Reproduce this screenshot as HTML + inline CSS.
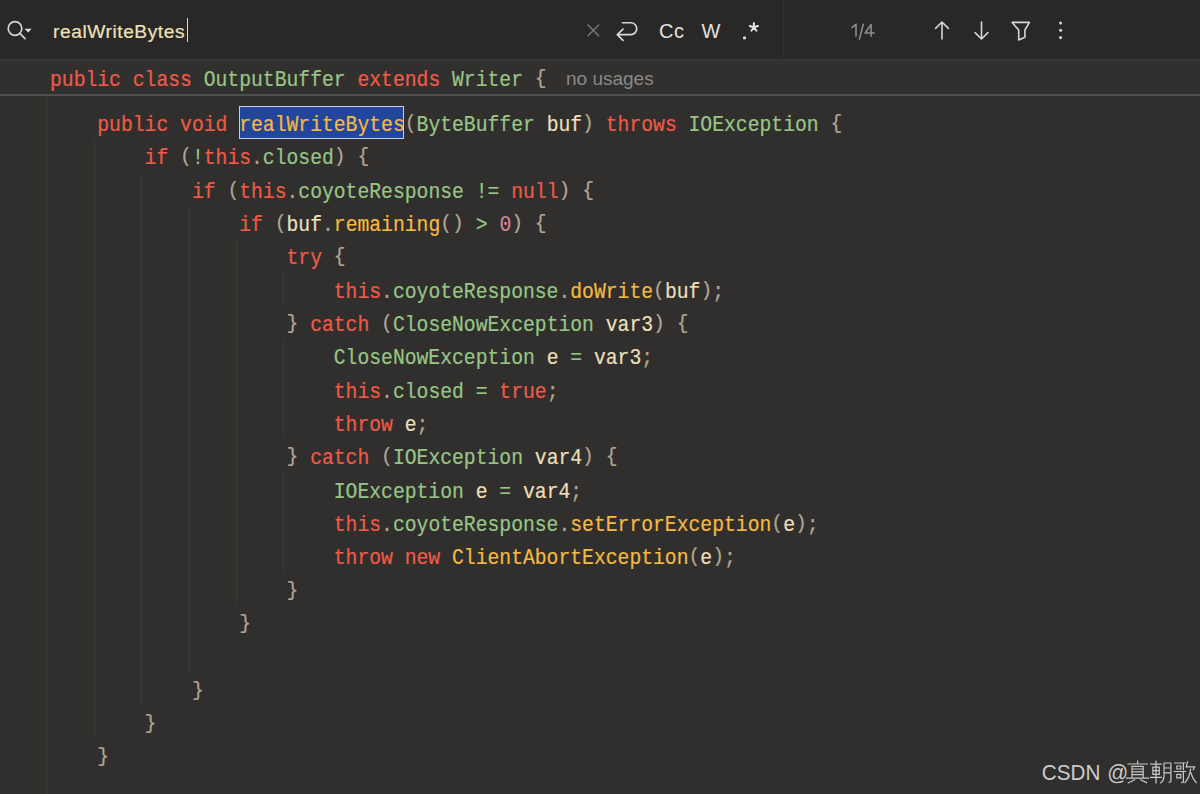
<!DOCTYPE html>
<html><head><meta charset="utf-8">
<style>
html,body{margin:0;padding:0;}
body{width:1200px;height:794px;overflow:hidden;background:#302f2d;position:relative;font-family:"Liberation Sans",sans-serif;}
.abs{position:absolute;}
#topbar{left:0;top:0;width:1200px;height:59px;background:#292826;}
#hdr{left:0;top:59px;width:1200px;height:35px;background:#32302e;border-top:2px solid #363533;box-sizing:border-box;}
#hdrb{left:0;top:94px;width:1200px;height:2px;background:#4f4e4c;}
#divv{left:783px;top:0;width:1px;height:59px;background:#343332;}
.code{font-family:"Liberation Mono",monospace;font-size:19.72px;white-space:pre;color:#ddc7a1;}
.ln{position:absolute;left:50px;margin-top:4.3px;height:33.333px;line-height:33.333px;transform:scaleY(1.1);transform-origin:0 22px;-webkit-text-stroke:0.2px currentColor;}
.k{color:#f05a47}
.g{color:#97c586}
.y{color:#f4b940}
.v{color:#eddfb8}
.p{color:#b1a692}
.n{color:#d3869b}
.br{font-style:normal;display:inline-block;transform:translateY(-1.6px) scaleY(0.9);}
.guide{position:absolute;width:1px;background:#3b3a37;}
#sel{left:239px;top:105.5px;width:165px;height:33px;background:#22479a;box-sizing:border-box;border:1.6px solid #c3cde2;}
</style></head><body>
<div id="topbar" class="abs"></div>
<div id="divv" class="abs"></div>
<div id="hdr" class="abs"></div>
<div id="hdrb" class="abs"></div>

<!-- search bar -->
<svg class="abs" style="left:0;top:0" width="60" height="59" viewBox="0 0 60 59">
  <circle cx="15" cy="28.5" r="6.8" fill="none" stroke="#d4d4d4" stroke-width="1.7"/>
  <line x1="19.9" y1="33.4" x2="25" y2="38.6" stroke="#d4d4d4" stroke-width="1.7" stroke-linecap="round"/>
  <path d="M24.6 28.8 L31.7 28.8 L28.15 32.6 Z" fill="#dcdcdc"/>
</svg>
<div class="abs" style="left:53px;top:20.3px;font-size:19.2px;letter-spacing:0.55px;color:#ede1bb;line-height:24px;-webkit-text-stroke:0.2px currentColor;">realWriteBytes</div>
<div class="abs" style="left:186.5px;top:18px;width:1px;height:24px;background:#d8d8d8;"></div>

<!-- right icons -->
<svg class="abs" style="left:580px;top:0" width="200" height="59" viewBox="580 0 200 59">
  <path d="M588 25 L598.7 35.7 M598.7 25 L588 35.7" stroke="#767574" stroke-width="1.5" stroke-linecap="round"/>
  <path d="M622.5 22.75 L630.8 22.75 A5.95 5.95 0 0 1 630.8 34.65 L617.5 34.65 M623 29.2 L617.3 34.65 L623 40.3" fill="none" stroke="#d8d8d8" stroke-width="1.7" stroke-linecap="round" stroke-linejoin="round"/>
</svg>
<div class="abs" style="left:659px;top:19px;font-size:20px;letter-spacing:0.6px;color:#e2e2e2;line-height:24px;">Cc</div>
<div class="abs" style="left:701.5px;top:19px;font-size:20px;color:#e2e2e2;line-height:24px;">W</div>
<svg class="abs" style="left:735px;top:15px" width="30" height="30" viewBox="735 15 30 30">
<rect x="743.1" y="36.5" width="2.8" height="2.8" rx="0.6" fill="#e2e2e2"/>
<path d="M753.90 27.30 L753.90 23.00 M753.90 27.30 L757.99 25.97 M753.90 27.30 L756.43 30.78 M753.90 27.30 L751.37 30.78 M753.90 27.30 L749.81 25.97" stroke="#e2e2e2" stroke-width="2" stroke-linecap="round"/>
</svg>
<svg class="abs" style="left:845px;top:15px" width="35" height="30" viewBox="845 15 35 30">
<path d="M852.2 27.4 L856 24.3 L856 36.2 M863.3 24.2 L859.4 39.1 M871.1 36.2 L871.1 24.5 L865.1 33 L874.1 33" fill="none" stroke="#8f8e8c" stroke-width="1.55" stroke-linecap="round" stroke-linejoin="round"/>
</svg>
<svg class="abs" style="left:920px;top:0" width="160" height="59" viewBox="920 0 160 59">
  <path d="M942 22 L942 39 M935.6 28.4 L942 22 L948.4 28.4" fill="none" stroke="#d6d6d6" stroke-width="1.6" stroke-linecap="round" stroke-linejoin="round"/>
  <path d="M981.5 22 L981.5 39 M975.1 32.6 L981.5 39 L987.9 32.6" fill="none" stroke="#d6d6d6" stroke-width="1.6" stroke-linecap="round" stroke-linejoin="round"/>
  <path d="M1012.2 22.4 L1029.4 22.4 L1024.9 30 L1024.9 37.2 L1018.7 39.9 L1018.7 30 Z" fill="none" stroke="#d6d6d6" stroke-width="1.6" stroke-linejoin="round"/>
  <circle cx="1060.6" cy="23" r="1.55" fill="#d6d6d6"/>
  <circle cx="1060.6" cy="30.3" r="1.55" fill="#d6d6d6"/>
  <circle cx="1060.6" cy="37.6" r="1.55" fill="#d6d6d6"/>
</svg>

<!-- header sticky line -->
<div class="code ln" style="top:60.3px"><span class="k">public class </span><span class="g">OutputBuffer </span><span class="k">extends </span><span class="g">Writer </span><span class="p"><i class="br">{</i></span></div>
<div class="abs" style="left:566px;top:64px;font-size:19px;color:#8a8886;line-height:30px;">no usages</div>

<!-- indent guides -->
<div class="guide" style="left:46px;top:96px;height:698px"></div>
<div class="guide" style="left:94px;top:139px;height:600px"></div>
<div class="guide" style="left:141.3px;top:172.3px;height:533.3px"></div>
<div class="guide" style="left:188.7px;top:205.7px;height:466.7px"></div>
<div class="guide" style="left:236px;top:239px;height:366.7px"></div>
<div class="guide" style="left:283.3px;top:272.3px;height:33.3px"></div>
<div class="guide" style="left:283.3px;top:339px;height:100px"></div>
<div class="guide" style="left:283.3px;top:472.3px;height:100px"></div>

<div id="sel" class="abs"></div>

<div class="code">
<div class="ln" style="top:105.7px">    <span class="k">public void </span><span class="y">realWriteBytes</span><span class="p"><i class="br">(</i></span><span class="g">ByteBuffer </span><span class="v">buf</span><span class="p"><i class="br">)</i> </span><span class="k">throws </span><span class="g">IOException </span><span class="p"><i class="br">{</i></span></div>
<div class="ln" style="top:139.03px">        <span class="k">if </span><span class="p"><i class="br">(</i></span><span class="g">!</span><span class="k">this</span><span class="p">.</span><span class="g">closed</span><span class="p"><i class="br">)</i> <i class="br">{</i></span></div>
<div class="ln" style="top:172.37px">            <span class="k">if </span><span class="p"><i class="br">(</i></span><span class="k">this</span><span class="p">.</span><span class="g">coyoteResponse != </span><span class="k">null</span><span class="p"><i class="br">)</i> <i class="br">{</i></span></div>
<div class="ln" style="top:205.7px">                <span class="k">if </span><span class="p"><i class="br">(</i></span><span class="v">buf</span><span class="p">.</span><span class="y">remaining</span><span class="p"><i class="br">(</i><i class="br">)</i> </span><span class="g">&gt; </span><span class="n">0</span><span class="p"><i class="br">)</i> <i class="br">{</i></span></div>
<div class="ln" style="top:239.03px">                    <span class="k">try </span><span class="p"><i class="br">{</i></span></div>
<div class="ln" style="top:272.37px">                        <span class="k">this</span><span class="p">.</span><span class="g">coyoteResponse</span><span class="p">.</span><span class="y">doWrite</span><span class="p"><i class="br">(</i></span><span class="v">buf</span><span class="p"><i class="br">)</i>;</span></div>
<div class="ln" style="top:305.7px">                    <span class="p"><i class="br">}</i> </span><span class="k">catch </span><span class="p"><i class="br">(</i></span><span class="g">CloseNowException </span><span class="v">var3</span><span class="p"><i class="br">)</i> <i class="br">{</i></span></div>
<div class="ln" style="top:339.03px">                        <span class="g">CloseNowException </span><span class="v">e </span><span class="g">= </span><span class="v">var3</span><span class="p">;</span></div>
<div class="ln" style="top:372.37px">                        <span class="k">this</span><span class="p">.</span><span class="g">closed = </span><span class="k">true</span><span class="p">;</span></div>
<div class="ln" style="top:405.7px">                        <span class="k">throw </span><span class="v">e</span><span class="p">;</span></div>
<div class="ln" style="top:439.03px">                    <span class="p"><i class="br">}</i> </span><span class="k">catch </span><span class="p"><i class="br">(</i></span><span class="g">IOException </span><span class="v">var4</span><span class="p"><i class="br">)</i> <i class="br">{</i></span></div>
<div class="ln" style="top:472.37px">                        <span class="g">IOException </span><span class="v">e </span><span class="g">= </span><span class="v">var4</span><span class="p">;</span></div>
<div class="ln" style="top:505.7px">                        <span class="k">this</span><span class="p">.</span><span class="g">coyoteResponse</span><span class="p">.</span><span class="y">setErrorException</span><span class="p"><i class="br">(</i></span><span class="v">e</span><span class="p"><i class="br">)</i>;</span></div>
<div class="ln" style="top:539.03px">                        <span class="k">throw new </span><span class="y">ClientAbortException</span><span class="p"><i class="br">(</i></span><span class="v">e</span><span class="p"><i class="br">)</i>;</span></div>
<div class="ln" style="top:572.37px">                    <span class="p"><i class="br">}</i></span></div>
<div class="ln" style="top:605.7px">                <span class="p"><i class="br">}</i></span></div>
<div class="ln" style="top:672.37px">            <span class="p"><i class="br">}</i></span></div>
<div class="ln" style="top:705.7px">        <span class="p"><i class="br">}</i></span></div>
<div class="ln" style="top:739.03px">    <span class="p"><i class="br">}</i></span></div>
</div>

<!-- watermark -->
<div class="abs" style="left:1041.8px;top:761.2px;font-size:20.7px;word-spacing:1px;color:#cbcbcb;line-height:24px;transform:scaleY(1.09);transform-origin:0 19.5px;">CSDN @</div>
<svg class="abs" style="left:1120px;top:755px" width="80" height="35" viewBox="1120 755 80 35">
<g fill="none" stroke="#c9c9c9" stroke-width="1.2" stroke-linecap="square">
<path d="M1128 764 H1147.4 M1137.6 761.2 V764 M1132 766.4 H1143.2 V778 M1132 766.4 V778 M1132 769 H1143.2 M1132 771.8 H1143.2 M1132 774.7 H1143.2 M1126.6 778.2 H1148.6 M1134.6 779.8 L1128.2 783 M1140.6 779.8 L1146.6 782.6"/>
<path d="M1150.8 764.2 H1161.2 M1156 761 V782.8 M1152.9 767.2 H1159.3 V774.3 H1152.9 Z M1152.9 770.7 H1159.3 M1150.6 777.3 H1161.4 M1164 763 H1170.9 V781.6 L1169.2 782.3 M1164 763 V776.5 Q1163.8 780.5 1160.8 782.8 M1164 768 H1170.9 M1164 772.8 H1170.9"/>
<path d="M1174.7 763 H1185 M1183.4 763 V769.6 M1176.8 766 H1180.8 V769 H1176.8 Z M1174.2 771.5 H1185.6 M1183.4 771.5 V782 L1181.8 782.6 M1176.8 774.4 H1180.8 V777.8 H1176.8 Z M1187.6 761.8 L1186.2 767 M1187 766.8 H1194.7 L1193.2 769.8 M1190.6 769.2 Q1189.5 777.5 1185 782.6 M1191 773 Q1193 779.5 1196.4 782.6"/>
</g></svg>
</body></html>
